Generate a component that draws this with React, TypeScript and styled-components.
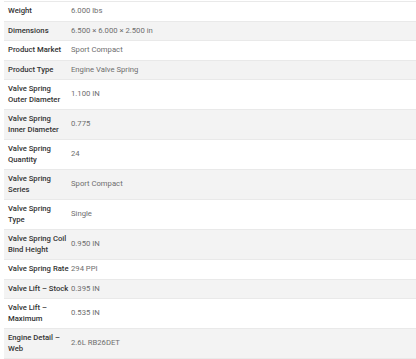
import React from "react";
import styled, { createGlobalStyle } from "styled-components";

interface ISpec {
  label: string[];
  value: string;
}

// label lines are split the way the product page wraps them
const specs: ISpec[] = [
  { label: ["Weight"], value: "6.000 lbs" },
  { label: ["Dimensions"], value: "6.500 × 6.000 × 2.500 in" },
  { label: ["Product Market"], value: "Sport Compact" },
  { label: ["Product Type"], value: "Engine Valve Spring" },
  { label: ["Valve Spring", "Outer Diameter"], value: "1.100 IN" },
  { label: ["Valve Spring", "Inner Diameter"], value: "0.775" },
  { label: ["Valve Spring", "Quantity"], value: "24" },
  { label: ["Valve Spring", "Series"], value: "Sport Compact" },
  { label: ["Valve Spring", "Type"], value: "Single" },
  { label: ["Valve Spring Coil", "Bind Height"], value: "0.950 IN" },
  { label: ["Valve Spring Rate"], value: "294 PPI" },
  { label: ["Valve Lift – Stock"], value: "0.395 IN" },
  { label: ["Valve Lift –", "Maximum"], value: "0.535 IN" },
  { label: ["Engine Detail –", "Web"], value: "2.6L RB26DET" },
];

const App = () => {
  return (
    <>
      <GlobalStyle />
      <Page>
        <SpecTable>
          {specs.map((spec, index) => (
            <Row key={spec.label.join(" ")} $striped={index % 2 === 1}>
              <Label>
                {spec.label.map((line, i) => (
                  <LabelLine key={i}>{line}</LabelLine>
                ))}
              </Label>
              <Value>{spec.value}</Value>
            </Row>
          ))}
        </SpecTable>
      </Page>
    </>
  );
};

const GlobalStyle = createGlobalStyle`
  body {
    margin: 0;
    background: #ffffff;
    font-family: Roboto, "Liberation Sans", sans-serif;
  }
`;

const Page = styled.div`
  padding: 1px 0 0 4px;
  overflow: hidden;
`;

const SpecTable = styled.div`
  width: 430px;
  border-bottom: 1px solid #e9e9e9;
`;

const Row = styled.div<{ $striped: boolean }>`
  display: grid;
  grid-template-columns: 63px 1fr;
  align-items: center;
  border-top: 1px solid #e9e9e9;
  background: ${(props) => (props.$striped ? "#f3f3f3" : "#ffffff")};
`;

const Label = styled.div`
  padding: 4px 0 4px 4px;
  font-size: 7.7px;
  line-height: 10.5px;
  font-weight: 500;
  color: #333333;
  white-space: nowrap;
`;

const LabelLine = styled.div`
  display: block;
`;

const Value = styled.div`
  padding: 4px;
  font-size: 7.7px;
  line-height: 10.5px;
  color: #6e6e6e;
`;

export default App;
